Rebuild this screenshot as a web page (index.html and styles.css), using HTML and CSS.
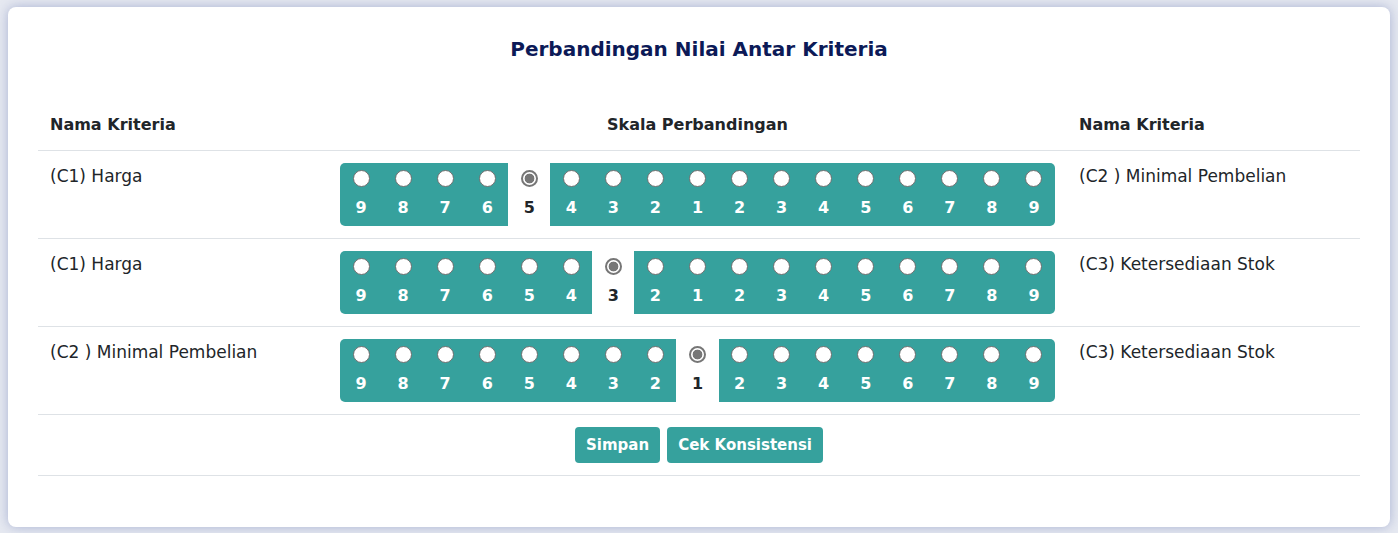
FILE: index.html
```html
<!DOCTYPE html>
<html lang="id">
<head>
<meta charset="utf-8">
<title>Perbandingan Nilai Antar Kriteria</title>
<link rel="stylesheet" href="styles.css">
</head>
<body>
<div class="card">
  <h2 class="card-title">Perbandingan Nilai Antar Kriteria</h2>
  <table class="cmp">
    <colgroup>
      <col class="c-left">
      <col class="c-mid">
      <col class="c-right">
    </colgroup>
    <thead>
      <tr>
        <th class="t-left">Nama Kriteria</th>
        <th class="t-center">Skala Perbandingan</th>
        <th class="t-left">Nama Kriteria</th>
      </tr>
    </thead>
    <tbody>
      <tr>
        <td class="name">(C1) Harga</td>
        <td>
          <div class="scale">
            <label class="opt"><input type="radio" name="r1"><span>9</span></label>
            <label class="opt"><input type="radio" name="r1"><span>8</span></label>
            <label class="opt"><input type="radio" name="r1"><span>7</span></label>
            <label class="opt"><input type="radio" name="r1"><span>6</span></label>
            <label class="opt sel"><input type="radio" name="r1" checked><span>5</span></label>
            <label class="opt"><input type="radio" name="r1"><span>4</span></label>
            <label class="opt"><input type="radio" name="r1"><span>3</span></label>
            <label class="opt"><input type="radio" name="r1"><span>2</span></label>
            <label class="opt"><input type="radio" name="r1"><span>1</span></label>
            <label class="opt"><input type="radio" name="r1"><span>2</span></label>
            <label class="opt"><input type="radio" name="r1"><span>3</span></label>
            <label class="opt"><input type="radio" name="r1"><span>4</span></label>
            <label class="opt"><input type="radio" name="r1"><span>5</span></label>
            <label class="opt"><input type="radio" name="r1"><span>6</span></label>
            <label class="opt"><input type="radio" name="r1"><span>7</span></label>
            <label class="opt"><input type="radio" name="r1"><span>8</span></label>
            <label class="opt"><input type="radio" name="r1"><span>9</span></label>
          </div>
        </td>
        <td class="name">(C2 ) Minimal Pembelian</td>
      </tr>
      <tr>
        <td class="name">(C1) Harga</td>
        <td>
          <div class="scale">
            <label class="opt"><input type="radio" name="r2"><span>9</span></label>
            <label class="opt"><input type="radio" name="r2"><span>8</span></label>
            <label class="opt"><input type="radio" name="r2"><span>7</span></label>
            <label class="opt"><input type="radio" name="r2"><span>6</span></label>
            <label class="opt"><input type="radio" name="r2"><span>5</span></label>
            <label class="opt"><input type="radio" name="r2"><span>4</span></label>
            <label class="opt sel"><input type="radio" name="r2" checked><span>3</span></label>
            <label class="opt"><input type="radio" name="r2"><span>2</span></label>
            <label class="opt"><input type="radio" name="r2"><span>1</span></label>
            <label class="opt"><input type="radio" name="r2"><span>2</span></label>
            <label class="opt"><input type="radio" name="r2"><span>3</span></label>
            <label class="opt"><input type="radio" name="r2"><span>4</span></label>
            <label class="opt"><input type="radio" name="r2"><span>5</span></label>
            <label class="opt"><input type="radio" name="r2"><span>6</span></label>
            <label class="opt"><input type="radio" name="r2"><span>7</span></label>
            <label class="opt"><input type="radio" name="r2"><span>8</span></label>
            <label class="opt"><input type="radio" name="r2"><span>9</span></label>
          </div>
        </td>
        <td class="name">(C3) Ketersediaan Stok</td>
      </tr>
      <tr>
        <td class="name">(C2 ) Minimal Pembelian</td>
        <td>
          <div class="scale">
            <label class="opt"><input type="radio" name="r3"><span>9</span></label>
            <label class="opt"><input type="radio" name="r3"><span>8</span></label>
            <label class="opt"><input type="radio" name="r3"><span>7</span></label>
            <label class="opt"><input type="radio" name="r3"><span>6</span></label>
            <label class="opt"><input type="radio" name="r3"><span>5</span></label>
            <label class="opt"><input type="radio" name="r3"><span>4</span></label>
            <label class="opt"><input type="radio" name="r3"><span>3</span></label>
            <label class="opt"><input type="radio" name="r3"><span>2</span></label>
            <label class="opt sel"><input type="radio" name="r3" checked><span>1</span></label>
            <label class="opt"><input type="radio" name="r3"><span>2</span></label>
            <label class="opt"><input type="radio" name="r3"><span>3</span></label>
            <label class="opt"><input type="radio" name="r3"><span>4</span></label>
            <label class="opt"><input type="radio" name="r3"><span>5</span></label>
            <label class="opt"><input type="radio" name="r3"><span>6</span></label>
            <label class="opt"><input type="radio" name="r3"><span>7</span></label>
            <label class="opt"><input type="radio" name="r3"><span>8</span></label>
            <label class="opt"><input type="radio" name="r3"><span>9</span></label>
          </div>
        </td>
        <td class="name">(C3) Ketersediaan Stok</td>
      </tr>
      <tr>
        <td colspan="3" class="actions">
          <button class="btn" type="button">Simpan</button>
          <button class="btn" type="button">Cek Konsistensi</button>
        </td>
      </tr>
    </tbody>
  </table>
</div>
</body>
</html>
```
FILE: styles.css
```css
html, body {
  margin: 0;
  padding: 0;
}
body {
  background: #e6e9f1;
  padding: 7px 8px 6px;
  font-family: "DejaVu Sans", "Noto Sans", sans-serif;
  color: #212529;
  font-size: 16px;
}
.card {
  background: #fff;
  border-radius: 8px;
  box-shadow: 0 0 12px rgba(70, 90, 160, 0.38);
  padding: 30px 30px 52px;
  height: 520px;
  box-sizing: border-box;
}
.card-title {
  margin: 0 0 39px;
  text-align: center;
  font-size: 20px;
  line-height: 24px;
  font-weight: 700;
  color: #0c1a57;
}
.cmp {
  width: 1322px;
  border-collapse: collapse;
  table-layout: fixed;
}
.c-left { width: 290px; }
.c-mid { width: 739px; }
.c-right { width: 293px; }
.cmp th {
  font-weight: 700;
  font-size: 16px;
  line-height: 24px;
  padding: 13px 12px 13px;
  border-bottom: 1px solid #dee2e6;
}
.t-left { text-align: left; }
.t-center { text-align: center; }
.cmp td {
  vertical-align: top;
  padding: 12px;
  line-height: 24px;
  font-size: 16px;
  border-bottom: 1px solid #dee2e6;
}
.cmp td.name {
  font-size: 17px;
  padding-top: 13px;
}
.scale {
  display: grid;
  grid-template-columns: repeat(17, 1fr);
  width: 715px;
}
.opt {
  display: flex;
  flex-direction: column;
  align-items: center;
  height: 63px;
  box-sizing: border-box;
  padding-top: 7px;
  background: #36a19d;
  color: #fff;
  font-weight: 700;
  font-size: 16px;
}
.opt:first-child {
  border-radius: 5px 0 0 5px;
}
.opt:last-child {
  border-radius: 0 5px 5px 0;
}
.opt.sel {
  background: #fff;
  color: #212529;
}
.opt span {
  display: block;
  margin-top: 9px;
  line-height: 24px;
}
.opt input {
  appearance: none;
  -webkit-appearance: none;
  margin: 0;
  width: 17px;
  height: 17px;
  border-radius: 50%;
  border: 1.5px solid #6f6f6f;
  background: #fff;
  box-sizing: border-box;
}
.opt input:checked {
  border: 2px solid #767676;
  background: radial-gradient(circle, #767676 0 4.6px, #fff 5.2px);
}
.cmp td.actions {
  text-align: center;
  padding: 12px;
}
.btn {
  font-family: inherit;
  font-size: 15px;
  font-weight: 700;
  color: #fff;
  background: #36a19d;
  border: none;
  border-radius: 4px;
  height: 36px;
  padding: 0 11px;
  margin: 0 1px;
  line-height: 36px;
  vertical-align: top;
}
```
